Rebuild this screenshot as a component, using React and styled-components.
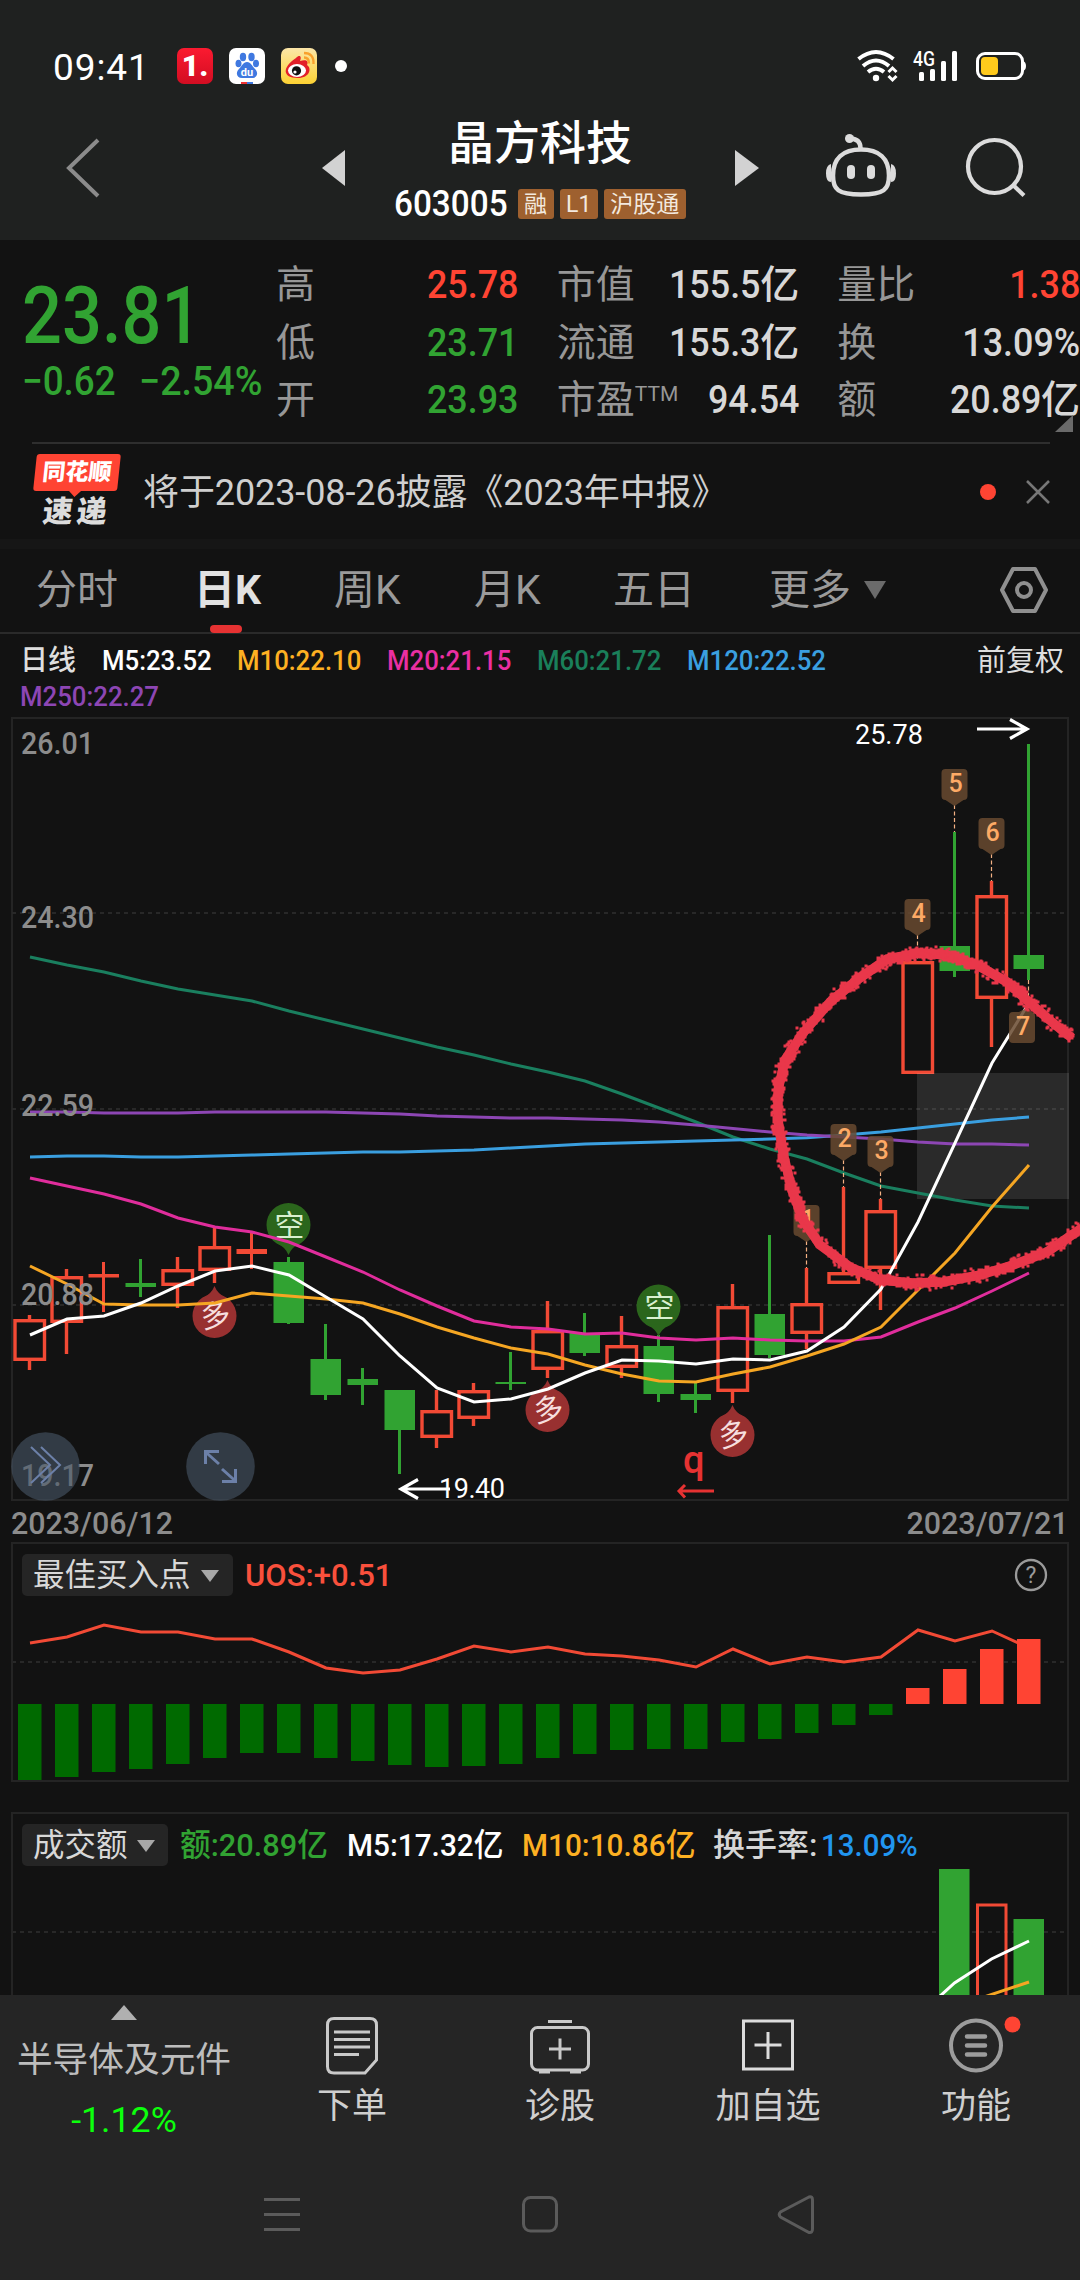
import React from "react";
import styled, { createGlobalStyle } from "styled-components";

const GlobalStyle = createGlobalStyle`
  * {
    box-sizing: border-box;
  }
  body {
    margin: 0;
    background: #121212;
    font-family: Roboto, "Noto Sans CJK SC", sans-serif;
  }
  svg {
    display: block;
    flex: none;
  }
`;

const RED = "#ff4433";
const GREEN = "#31a332";

const Screen = styled.div`
  width: 1080px;
  height: 2280px;
  overflow: hidden;
  display: flex;
  flex-direction: column;
  background: #121212;
  color: #d6d6d6;
`;

// condensed numerals
const Digits = styled.span`
  display: inline-block;
  white-space: nowrap;
  font-weight: ${({ $weight }) => $weight || 500};
  color: ${({ $color }) => $color || "inherit"};
  transform: scaleX(${({ $stretch }) => $stretch || 0.92});
  transform-origin: ${({ $right }) => ($right ? "right" : "left")} center;
`;

/* ---------- status bar ---------- */

const StatusBar = styled.div`
  height: 92px;
  padding: 40px 53px 0 53px;
  background: #1f2120;
  display: flex;
  justify-content: space-between;
  color: #fff;
`;

const StatusGroup = styled.div`
  display: flex;
  align-items: center;
  height: 52px;
`;

const Clock = styled.div`
  width: 124px;
  font-size: 37px;
  line-height: 52px;
  padding-top: 4px;
  letter-spacing: 0.9px;
`;

const AppIcon = styled.div`
  width: 36px;
  height: 36px;
  margin-right: 16px;
  border-radius: 7px;
  overflow: hidden;
  background: ${({ $bg }) => $bg};
  color: #fff;
  font-size: 30px;
  font-weight: 900;
  line-height: 36px;
  text-align: center;
`;

const MoreDot = styled.div`
  width: 12px;
  height: 12px;
  margin-left: 2px;
  border-radius: 50%;
  background: #fff;
`;

function StatusIcons() {
  return (
    <svg width="172" height="52" viewBox="855 40 172 52">
      <g fill="none" stroke="#fff" strokeWidth="4">
        <path d="M858.5 59 Q876 45 893.5 59" />
        <path d="M863 66 Q876 55 889 66" />
        <path d="M868 72 Q876 65.500 884 72" />
      </g>
      <circle cx="876" cy="78" r="3.200" fill="#fff" />
      <path d="M888.500 72 l4 -4 l4 4 M888.500 76 l4 4 l4 -4" fill="none" stroke="#fff" strokeWidth="3" />
      <text x="913" y="66" fontSize="20" fontWeight="500" fill="#fff" textLength="22" lengthAdjust="spacingAndGlyphs">
        4G
      </text>
      <g fill="#fff">
        <rect x="919" y="72" width="5" height="9" rx="1.500" />
        <rect x="930" y="69" width="5" height="12" rx="1.500" />
        <rect x="941" y="61" width="5" height="20" rx="1.500" />
        <rect x="952" y="51" width="5" height="30" rx="1.500" />
      </g>
      <rect x="977.500" y="53.500" width="45" height="25" rx="7.500" fill="none" stroke="#fff" strokeWidth="3" />
      <path d="M1023 61 q3 1 3 5 t-3 5z" fill="#fff" />
      <rect x="981" y="57" width="17" height="18" rx="4" fill="#ffca1c" />
    </svg>
  );
}

function Status() {
  return (
    <StatusBar>
      <StatusGroup>
        <Clock>09:41</Clock>
        <AppIcon $bg="linear-gradient(#fb1a30, #d20d22)">1.</AppIcon>
        <AppIcon $bg="#fff">
          <svg width="36" height="36" viewBox="0 0 36 36">
            <g fill="#3f78e0">
              <ellipse cx="14" cy="9" rx="3.200" ry="4.200" />
              <ellipse cx="22.500" cy="9" rx="3.200" ry="4.200" />
              <ellipse cx="9.500" cy="15.500" rx="3" ry="3.800" />
              <ellipse cx="27" cy="15.500" rx="3" ry="3.800" />
              <path d="M18 14 c4 0 5 4 8 7 c4 4 2 9 -3 9 h-10 c-5 0 -7 -5 -3 -9 c3 -3 4 -7 8 -7z" />
            </g>
            <text x="18" y="28" fontSize="11" fontWeight="700" fill="#fff" textAnchor="middle">
              du
            </text>
            <rect x="12" y="34" width="6" height="2" fill="#e33" />
            <rect x="18" y="34" width="6" height="2" fill="#3f78e0" />
          </svg>
        </AppIcon>
        <AppIcon $bg="linear-gradient(#fbe6a8, #fcd233)">
          <svg width="36" height="36" viewBox="0 0 36 36">
            <path d="M15 10 c4 -4 6 -1 4 3 c6 -2 9 0 7 4 c5 3 3 13 -9 13 c-16 0 -16 -11 -2 -20z" fill="#e3202a" />
            <ellipse cx="16" cy="22.500" rx="9" ry="6.500" fill="#fff" />
            <circle cx="15.500" cy="22.800" r="4.600" fill="#111" />
            <circle cx="14" cy="24" r="1.600" fill="#fff" />
            <path d="M23 9.500 q5 0 5 6 M23 5 q10 0 9.500 11" fill="none" stroke="#f9a12c" strokeWidth="2.400" />
          </svg>
        </AppIcon>
        <MoreDot />
      </StatusGroup>
      <StatusGroup>
        <StatusIcons />
      </StatusGroup>
    </StatusBar>
  );
}

/* ---------- title bar ---------- */

const TitleBar = styled.header`
  height: 148px;
  background: #1f2120;
  display: grid;
  grid-template-columns: 322px 23px 390px 24px 67px 70px 69px 58px;
  align-items: center;
`;

const BackSlot = styled.div`
  padding: 3px 0 0 65px;
`;

const StockTitle = styled.div`
  align-self: start;
  padding-top: 24px;
  display: flex;
  flex-direction: column;
  align-items: center;
`;

const StockName = styled.div`
  height: 50px;
  font-size: 46px;
  font-weight: 500;
  line-height: 54px;
  color: #fff;
`;

const StockCode = styled.div`
  margin-top: 22px;
  width: 293px;
  height: 32px;
  display: flex;
  align-items: center;
  gap: 6px;
  font-size: 37px;
  color: #fff;
`;

const CodeDigits = styled(Digits)`
  width: 118px;
  line-height: 34px;
`;

const Tag = styled.span`
  height: 30px;
  padding: 0 6.5px;
  border-radius: 3px;
  background: #9e602f;
  color: #f3e9df;
  font-size: 23px;
  line-height: 31px;
  white-space: nowrap;
`;

const Slot = styled.div`
  padding-top: ${({ $top }) => $top || 0}px;
`;

function Header() {
  return (
    <TitleBar>
      <BackSlot>
        <svg width="36" height="60" viewBox="0 0 36 60">
          <path d="M33 2 L4 30 L33 58" fill="none" stroke="#8b8b8b" strokeWidth="4" />
        </svg>
      </BackSlot>
      <Slot $top={4}>
        <svg width="23" height="36">
          <path d="M23 0 V36 L0 18z" fill="#d2d2d2" />
        </svg>
      </Slot>
      <StockTitle>
        <StockName>晶方科技</StockName>
        <StockCode>
          <CodeDigits $stretch={0.9}>603005</CodeDigits>
          <Tag>融</Tag>
          <Tag>L1</Tag>
          <Tag>沪股通</Tag>
        </StockCode>
      </StockTitle>
      <Slot $top={4}>
        <svg width="24" height="36">
          <path d="M0 0 V36 L24 18z" fill="#d2d2d2" />
        </svg>
      </Slot>
      <span />
      <svg width="70" height="66" viewBox="826 134 70 66">
        <g fill="none" stroke="#dcdcdc" strokeWidth="4.500">
          <path d="M861 150.500 c-18 0 -28 9 -28 26 c0 14 5 19 28 19 s28 -5 28 -19 c0 -17 -10 -26 -28 -26z" />
          <path d="M860.500 149 c0 -6 -3 -9 -10 -9.500" />
        </g>
        <g fill="#dcdcdc">
          <circle cx="849.500" cy="139.500" r="4.500" />
          <rect x="847" y="166" width="8" height="14" rx="4" />
          <rect x="867" y="166" width="8" height="14" rx="4" />
          <path d="M831 165 q-5 1 -5 9.500 t5 8.500z" />
          <path d="M891 165 q5 1 5 9.500 t-5 8.500z" />
        </g>
      </svg>
      <span />
      <Slot $top={4}>
        <svg width="62" height="62" viewBox="965 137 62 62">
          <circle cx="994.500" cy="166.500" r="26.500" fill="none" stroke="#dcdcdc" strokeWidth="4.200" />
          <path d="M1013 185 L1024 195.500" stroke="#dcdcdc" strokeWidth="4.200" />
        </svg>
      </Slot>
    </TitleBar>
  );
}

/* ---------- quote ---------- */

const QuotePanel = styled.section`
  height: 204px;
  display: grid;
  grid-template-columns: 276px 804px;
  position: relative;
`;

const PriceBlock = styled.div`
  padding: 15px 0 0 22px;
  color: ${GREEN};
`;

const Price = styled.div`
  height: 78px;
  padding-top: 22px;
  font-size: 79px;
  line-height: 78px;
`;

const Change = styled.div`
  margin-top: 29px;
  display: grid;
  grid-template-columns: 117px 125px;
  font-size: 40px;
  line-height: 40px;
`;

const StatColumns = styled.div`
  padding-top: 17px;
  display: flex;
  gap: 38px;
`;

const StatColumn = styled.div`
  flex: 1;
`;

const StatRow = styled.div`
  height: 57.5px;
  display: flex;
  justify-content: space-between;
  font-size: 39px;
  line-height: 57.5px;
  white-space: nowrap;
`;

const StatLabel = styled.span`
  color: #979797;
`;

const Sup = styled.span`
  position: relative;
  top: -12px;
  font-size: 21px;
`;

const StatValue = styled.span`
  color: ${({ $color }) => $color || "#d8d8d8"};
  font-weight: 500;
`;

const Corner = styled.div`
  position: absolute;
  right: 7px;
  bottom: 12px;
  border-left: 18px solid transparent;
  border-bottom: 17px solid #6a6a6a;
`;

const stats = [
  [
    { label: "高", value: "25.78", color: RED },
    { label: "低", value: "23.71", color: GREEN },
    { label: "开", value: "23.93", color: GREEN },
  ],
  [
    { label: "市值", value: "155.5", unit: "亿" },
    { label: "流通", value: "155.3", unit: "亿" },
    { label: "市盈", sup: "TTM", value: "94.54" },
  ],
  [
    { label: "量比", value: "1.38", color: RED },
    { label: "换", value: "13.09%" },
    { label: "额", value: "20.89", unit: "亿" },
  ],
];

function Quote() {
  return (
    <QuotePanel>
      <PriceBlock>
        <Price>
          <Digits $stretch={0.89}>23.81</Digits>
        </Price>
        <Change>
          <Digits>−0.62</Digits>
          <Digits $stretch={0.94}>−2.54%</Digits>
        </Change>
      </PriceBlock>
      <StatColumns>
        {stats.map((column, i) => (
          <StatColumn key={i}>
            {column.map((s) => (
              <StatRow key={s.label}>
                <StatLabel>
                  {s.label}
                  {s.sup && <Sup>{s.sup}</Sup>}
                </StatLabel>
                <StatValue $color={s.color}>
                  <Digits $right>{s.value}</Digits>
                  {s.unit}
                </StatValue>
              </StatRow>
            ))}
          </StatColumn>
        ))}
      </StatColumns>
      <Corner />
    </QuotePanel>
  );
}

/* ---------- news ---------- */

const News = styled.section`
  height: 97px;
  margin: -2px 30px 0 32px;
  border-top: 2px solid #2e2e2e;
  display: flex;
  align-items: center;
`;

const NewsLogo = styled.div`
  width: 88px;
  height: 76px;
  font-weight: 900;
  color: #fff;
`;

const LogoTop = styled.div`
  position: relative;
  width: 84px;
  height: 37px;
  margin-left: 3px;
  border-radius: 3px;
  background: ${RED};
  transform: skewX(-6deg);
  font-size: 23px;
  line-height: 37px;
  text-align: center;
  &::after {
    content: "";
    position: absolute;
    left: 36px;
    top: 37px;
    border: 6px solid transparent;
    border-top-color: ${RED};
    border-bottom: 0;
  }
`;

const LogoBottom = styled.div`
  padding-left: 11px;
  height: 38px;
  font-size: 30px;
  line-height: 41px;
  letter-spacing: 4px;
  color: #dcdcdc;
  transform: skewX(-6deg);
`;

const NewsText = styled.div`
  flex: 1;
  margin-left: 23px;
  padding-top: 2px;
  font-size: 36px;
  line-height: 50px;
  letter-spacing: -0.1px;
  color: #cfcfcf;
`;

const RedDot = styled.div`
  width: 16px;
  height: 16px;
  margin-right: 30px;
  border-radius: 50%;
  background: ${RED};
`;

/* ---------- tabs ---------- */

const Tabs = styled.nav`
  height: 95px;
  border-top: 10px solid #161616;
  border-bottom: 2px solid #2a2a2a;
  padding: 0 31px 0 36px;
  display: grid;
  grid-template-columns: 158px 140px 140px 139px 156px 1fr 49px;
`;

const Tab = styled.div`
  font-size: 41px;
  line-height: 48px;
  height: 84px;
  padding-bottom: 2px;
  color: ${({ $active }) => ($active ? "#e2e2e2" : "#9a9a9a")};
  font-weight: ${({ $active }) => ($active ? 700 : 400)};
  display: flex;
  align-items: center;
  position: relative;
  white-space: nowrap;
  &::after {
    content: "";
    display: ${({ $active }) => ($active ? "block" : "none")};
    position: absolute;
    left: 16px;
    bottom: 0;
    width: 32px;
    height: 8px;
    border-radius: 4px;
    background: #e63232;
  }
`;

const Caret = styled.span`
  margin-left: ${({ $gap }) => $gap}px;
  border: ${({ $w }) => $w / 2}px solid transparent;
  border-top: ${({ $h }) => $h}px solid ${({ $color }) => $color};
  border-bottom: 0;
`;

function TabBar() {
  return (
    <Tabs>
      <Tab>分时</Tab>
      <Tab $active>日K</Tab>
      <Tab>周K</Tab>
      <Tab>月K</Tab>
      <Tab>五日</Tab>
      <Tab>
        更多
        <Caret $gap={13} $w={23} $h={18} $color="#6b6b6b" />
      </Tab>
      <Tab>
        <svg width="48" height="46" viewBox="0 0 48 46">
          <path d="M13 2 H35 L46 23 L35 44 H13 L2 23z" fill="none" stroke="#8f8f8f" strokeWidth="4" strokeLinejoin="round" />
          <circle cx="24" cy="23" r="7" fill="none" stroke="#8f8f8f" strokeWidth="4" />
        </svg>
      </Tab>
    </Tabs>
  );
}

/* ---------- moving average legend ---------- */

const Legend = styled.div`
  height: 82px;
  padding: 9px 16px 0 20px;
  display: grid;
  grid-template-columns: 82px 135px 150px 150px 150px 1fr auto;
  grid-auto-rows: 36px;
  font-size: 28px;
  line-height: 36px;
`;

const LegendLabel = styled.span`
  font-weight: ${({ $bold }) => ($bold ? 500 : 400)};
  font-size: ${({ $bold }) => ($bold ? 28 : 29)}px;
  color: #dedede;
`;

const averages = [
  { text: "M5:23.52", color: "#ffffff" },
  { text: "M10:22.10", color: "#fdb022" },
  { text: "M20:21.15", color: "#ea2fa2" },
  { text: "M60:21.72", color: "#1a7f5a" },
  { text: "M120:22.52", color: "#3a9fe0" },
];

/* ---------- candles ---------- */

const candleX = (i) => 29.5 + i * 37;

// [up, high, bodyTop, bodyBottom, low] in chart units
const candles = [
  [1, 1315, 1319, 1361, 1370],
  [1, 1269, 1276, 1323, 1354],
  [1, 1262, 1274, 1277.5, 1312],
  [0, 1259, 1283, 1287, 1297],
  [1, 1257, 1269, 1286, 1308],
  [1, 1228, 1246, 1271, 1283],
  [1, 1232, 1249, 1254, 1269],
  [0, 1257, 1262, 1323, 1324],
  [0, 1324, 1359, 1395, 1400],
  [0, 1368, 1379, 1385, 1405],
  [0, 1390, 1390, 1430, 1474],
  [1, 1390, 1410, 1438, 1448],
  [1, 1383, 1390, 1419, 1426],
  [0, 1352, 1382, 1384, 1390],
  [1, 1301, 1330, 1370, 1378],
  [0, 1313, 1333, 1353, 1356],
  [1, 1316, 1345, 1368, 1378],
  [0, 1335, 1346, 1394, 1402],
  [0, 1383, 1394, 1400, 1413],
  [1, 1284, 1306, 1392, 1403],
  [0, 1235, 1314, 1355, 1358],
  [1, 1268, 1303, 1334, 1349],
  [1, 1187, 1272, 1284, 1284],
  [1, 1199, 1210, 1269, 1310],
  [1, 961, 961, 1074, 1074],
  [0, 832, 946, 971, 977],
  [1, 881, 895, 999, 1047],
  [0, 744, 955, 969, 980],
];

const lines = [
  {
    color: "#1a7f5f",
    ys: [957, 965, 972, 981, 989, 995, 1001, 1011, 1020, 1029, 1038, 1047, 1055, 1064, 1072, 1081, 1094, 1108, 1122, 1137, 1149, 1159, 1173, 1186, 1193, 1200, 1206, 1208],
  },
  {
    color: "#3a9fe0",
    ys: [1157, 1156, 1156, 1157, 1157, 1156, 1155, 1154, 1153, 1152, 1152, 1151, 1150, 1148, 1146, 1144, 1143, 1142, 1141, 1140, 1139, 1137.7, 1135, 1132, 1128, 1124, 1120, 1117],
  },
  {
    color: "#8d46b4",
    ys: [1112, 1112, 1113, 1113, 1113, 1112, 1112, 1112, 1112, 1113, 1114, 1116, 1117, 1118, 1118, 1119, 1120, 1122, 1125, 1128.5, 1132, 1135, 1137, 1139, 1142, 1144, 1144, 1145],
  },
  {
    color: "#e02d9c",
    ys: [1178, 1186, 1194, 1204, 1218, 1227, 1232, 1242, 1257, 1272, 1290, 1306, 1321, 1327, 1329, 1334, 1333, 1338, 1340, 1338, 1340, 1341, 1341, 1337, 1322, 1308, 1291, 1273],
  },
  {
    color: "#f5a623",
    ys: [1266, 1284, 1304, 1305, 1305, 1303, 1293, 1296, 1299, 1303, 1314, 1327, 1338, 1348, 1354, 1365, 1374, 1381, 1382, 1374, 1367, 1356, 1344, 1327, 1290, 1253, 1207, 1165],
  },
  {
    color: "#ffffff",
    ys: [1335, 1319, 1316, 1303, 1286, 1271, 1266, 1275, 1297, 1319, 1356, 1388, 1402, 1399, 1389, 1373, 1360, 1361, 1364, 1359, 1360, 1351, 1327, 1289, 1222, 1143, 1063, 1003],
  },
];

const toPoints = (ys) => ys.map((y, i) => `${candleX(i) + 0.5},${y}`).join(" ");

const scaleLabels = [
  ["26.01", 754],
  ["24.30", 928],
  ["22.59", 1116],
  ["20.88", 1305],
  ["19.17", 1486],
];

// [number, candle index, box top, candle high]
const countTags = [
  [1, 21, 1205, 1268],
  [2, 22, 1124, 1187],
  [3, 23, 1136, 1199],
  [4, 24, 899, 961],
  [5, 25, 769, 832],
  [6, 26, 818, 881],
];

const pins = [
  { text: "空", x: 288.5, y: 1225, dir: 1 },
  { text: "空", x: 658.5, y: 1306.5, dir: 1 },
  { text: "多", x: 214.5, y: 1316, dir: -1 },
  { text: "多", x: 547.5, y: 1410, dir: -1 },
  { text: "多", x: 732.5, y: 1435, dir: -1 },
];

const scribble = [
  [1072, 1038], [1053, 1023], [1030, 1003], [1007, 982], [977, 965], [947, 955], [920, 953],
  [887, 959], [857, 980], [830, 1002], [803, 1033], [785, 1060], [778, 1090], [778, 1120],
  [783, 1153], [792, 1190], [803, 1220], [820, 1245], [850, 1267], [880, 1280], [913, 1283],
  [943, 1282], [980, 1275], [1013, 1265], [1047, 1252], [1082, 1228],
];

// small square dabs scattered along the pen stroke
function crayonPath(points) {
  let seed = 7;
  const rand = () => {
    seed = (seed * 16807) % 2147483647;
    return seed / 2147483647;
  };
  let d = "";
  for (let i = 0; i < points.length - 1; i++) {
    const [x1, y1] = points[i];
    const [x2, y2] = points[i + 1];
    const len = Math.hypot(x2 - x1, y2 - y1);
    const nx = (y1 - y2) / len;
    const ny = (x2 - x1) / len;
    for (let s = 0; s < len; s += 0.5) {
      const t = s / len;
      const off = (rand() + rand() - 1) * 8;
      const x = Math.round(x1 + (x2 - x1) * t + nx * off) - 1.5;
      const y = Math.round(y1 + (y2 - y1) * t + ny * off) - 1.5;
      d += `M${x} ${y}h3v3h-3z`;
    }
  }
  return d;
}

function Candle({ data, x }) {
  const [up, high, top, bottom, low] = data;
  const color = up ? "#f24a35" : GREEN;
  if (up && bottom - top > 6) {
    return (
      <g stroke={color} strokeWidth="3.400" fill="none">
        <path d={`M${x} ${high}V${top} M${x} ${bottom}V${low}`} />
        <rect x={x - 14.5} y={top + 1.7} width="29.500" height={bottom - top - 3.4} />
      </g>
    );
  }
  return (
    <g fill={color}>
      <rect x={x - 1.5} y={high} width="3" height={low - high} />
      <rect x={x - 15} y={top} width="30.500" height={bottom - top} />
    </g>
  );
}

function CountTag({ n, x, top, high }) {
  return (
    <g>
      <path d={`M${x} ${top + 36}V${high}`} stroke="#f4b183" strokeWidth="1.200" strokeDasharray="4 2.500" />
      <path
        d={`M${x - 9} ${top}h18q4 0 4 4v23q0 4 -4 4l-9 6l-9 -6q-4 0 -4 -4v-23q0 -4 4 -4z`}
        fill="#684a30"
        fillOpacity="0.85"
      />
      <text x={x + 1} y={top + 23} fontSize="25" fontWeight="500" fill="#fdaa66" textAnchor="middle">
        {n}
      </text>
    </g>
  );
}

function Pin({ text, x, y, dir }) {
  return (
    <g fill={dir > 0 ? "#2b661c" : "#983030"}>
      <circle cx={x} cy={y} r="22" />
      <path d={`M${x - 12} ${y + 18 * dir}Q${x - 3} ${y + 22 * dir} ${x} ${y + 30 * dir}Q${x + 3} ${y + 22 * dir} ${x + 12} ${y + 18 * dir}z`} />
      <text
        x={x + 1}
        y={y + 10.5}
        fontSize="30"
        fill={dir > 0 ? "#d9f0cf" : "#f6dede"}
        textAnchor="middle"
        transform={dir > 0 ? undefined : `rotate(-10 ${x} ${y})`}
      >
        {text}
      </text>
    </g>
  );
}

function KChart() {
  return (
    <svg width="1080" height="788" viewBox="0 716 1080 788">
      <rect x="12" y="718" width="1056" height="782" fill="none" stroke="#242424" strokeWidth="2" />
      <path d="M12 913H1068M12 1109H1068M12 1305H1068" stroke="#282828" strokeWidth="2" strokeDasharray="4 4" />
      {candles.map((c, i) => (
        <Candle key={i} data={c} x={candleX(i)} />
      ))}
      <rect x="917" y="1073" width="152" height="126" fill="#fff" fillOpacity="0.1" />
      {pins.map((p) => (
        <Pin key={p.x} {...p} />
      ))}
      {lines.map((l) => (
        <polyline key={l.color} points={toPoints(l.ys)} fill="none" stroke={l.color} strokeWidth="3" />
      ))}
      {scaleLabels.map(([label, y]) => (
        <text key={label} x="21" y={y} fontSize="32" fontWeight="500" fill="#8c8c8c" textLength="73" lengthAdjust="spacingAndGlyphs">
          {label}
        </text>
      ))}
      {countTags.map(([n, i, top, high]) => (
        <CountTag key={n} n={n} x={candleX(i)} top={top} high={high} />
      ))}
      <path d="M1028.500 980V1008" stroke="#f4b183" strokeWidth="1.200" strokeDasharray="4 2.500" />
      <path d="M1013 1012h6l9 -5l3 5q4 0 4 4v23q0 4 -4 4h-18q-4 0 -4 -4v-23q0 -4 4 -4z" fill="#684a30" fillOpacity="0.85" />
      <text x="1023" y="1035" fontSize="25" fontWeight="500" fill="#fdaa66" textAnchor="middle">
        7
      </text>
      <polyline points={scribble.join(" ")} fill="none" stroke="#e9374a" strokeWidth="9.500" strokeLinejoin="round" />
      <path d={crayonPath(scribble)} fill="#e9374a" />
      <text x="855" y="744" fontSize="27" fill="#fff">
        25.78
      </text>
      <path d="M977 729H1027M1010 719.500L1027 729L1010 738.500" fill="none" stroke="#fff" strokeWidth="3.200" />
      <text x="439" y="1498" fontSize="27" fill="#fff" textLength="66">
        19.40
      </text>
      <path d="M450 1489H401M418 1479.500L401 1489L418 1498.500" fill="none" stroke="#fff" strokeWidth="3.200" />
      <text x="683" y="1473" fontSize="38" fontWeight="500" fill="#e63232">
        q
      </text>
      <path d="M714 1491H680M685 1485L679 1491L685 1497.500" fill="none" stroke="#e63232" strokeWidth="3" />
      <g fill="#475667" fillOpacity="0.6">
        <circle cx="45.500" cy="1466.500" r="34.300" />
        <circle cx="220.500" cy="1466.500" r="34.300" />
      </g>
      <g fill="none" stroke="#6c80a8">
        <path d="M31 1447L50 1465L31 1483M41 1447L60 1465L41 1483" strokeWidth="2" />
        <path d="M219 1464L205 1451.500M205.500 1464V1451.500H219M222 1469L236 1481.500M222 1481.500H235.500V1469" strokeWidth="3" />
      </g>
    </svg>
  );
}

const DateRow = styled.div`
  height: 38px;
  padding: 0 12px 0 11px;
  display: flex;
  justify-content: space-between;
  font-size: 32px;
  line-height: 39px;
  color: #8c8c8c;
`;

/* ---------- sub charts ---------- */

const SubPanel = styled.section`
  height: ${({ $height }) => $height}px;
  margin: 0 11px;
  border: 2px solid #242424;
  border-bottom-width: ${({ $open }) => ($open ? 0 : 2)}px;
  overflow: hidden;
  display: flex;
  flex-direction: column;
`;

const SubHead = styled.div`
  height: 53px;
  flex: none;
  padding: 9px 19px 0 9px;
  display: flex;
  align-items: center;
  font-size: 32px;
  line-height: 42px;
`;

const Picker = styled.div`
  width: ${({ $width }) => $width}px;
  height: 42px;
  margin-right: 12px;
  padding: 2px 0 0 11px;
  border-radius: 5px;
  background: #252525;
  color: #d8d8d8;
  font-size: 31.5px;
  display: flex;
  align-items: center;
  white-space: nowrap;
`;

const Cell = styled.div`
  width: ${({ $width }) => $width}px;
  white-space: nowrap;
  font-weight: 500;
`;

const Spacer = styled.div`
  flex: 1;
`;

const uosLine = [1643, 1637, 1625, 1632, 1632, 1639, 1639, 1652, 1668, 1673, 1670, 1659, 1646, 1652, 1647, 1654, 1656, 1660, 1667, 1649, 1664, 1657, 1662, 1657, 1630, 1641, 1631, 1648];
const uosBars = [-77, -73, -68, -65, -60, -54, -49, -49, -54, -57, -61, -63, -62, -60, -54, -50, -46, -45, -45, -38, -35, -29, -21, -11, 16, 35, 55, 65];

function UosChart() {
  return (
    <svg width="1054" height="184" viewBox="13 1597 1054 184">
      <path d="M12 1662H1068" stroke="#282828" strokeWidth="2" strokeDasharray="4 4" />
      <polyline points={toPoints(uosLine)} fill="none" stroke="#f24a35" strokeWidth="3" />
      {uosBars.map((v, i) => (
        <rect
          key={i}
          x={candleX(i) - 11.5}
          y={v > 0 ? 1704 - v : 1704}
          width="23.500"
          height={Math.abs(v)}
          fill={v > 0 ? RED : "#006a00"}
        />
      ))}
    </svg>
  );
}

function VolumeChart() {
  return (
    <svg width="1054" height="128" viewBox="13 1867 1054 128">
      <path d="M12 1932H1068" stroke="#282828" strokeWidth="2" strokeDasharray="4 4" />
      <rect x="939" y="1869" width="30.500" height="130" fill={GREEN} />
      <rect x="977.500" y="1905" width="28.500" height="100" fill="none" stroke="#f24a35" strokeWidth="3" />
      <rect x="1013.500" y="1919" width="30.500" height="80" fill={GREEN} />
      <path d="M939 1997L954.500 1983L991.500 1959L1029 1941" fill="none" stroke="#fff" strokeWidth="3" />
      <path d="M984 1997L1029 1982" fill="none" stroke="#f5a623" strokeWidth="3" />
    </svg>
  );
}

/* ---------- bottom bar ---------- */

const BottomBar = styled.footer`
  height: 158px;
  background: #252525;
  display: grid;
  grid-template-columns: 248px repeat(4, 208px);
`;

const Sector = styled.div`
  display: flex;
  flex-direction: column;
  align-items: center;
  padding-top: 10px;
  font-size: 35.7px;
  color: #bdbdbd;
`;

const UpCaret = styled.div`
  border: 13px solid transparent;
  border-bottom: 15px solid #b0b0b0;
  border-top: 0;
`;

const SectorName = styled.div`
  margin-top: 14px;
  line-height: 52px;
`;

const SectorChange = styled.div`
  margin-top: 8px;
  line-height: 52px;
  color: #0cff0c;
`;

const Action = styled.div`
  padding-top: 18px;
  display: flex;
  flex-direction: column;
  align-items: center;
  color: #cfcfcf;
  font-size: 35px;
`;

const ActionLabel = styled.div`
  margin-top: 4px;
  line-height: 52px;
`;

const actions = [
  {
    label: "下单",
    icon: (
      <g fill="none" stroke="#c9c9c9" strokeWidth="3">
        <path d="M12 5.500H48Q54.500 5.500 54.500 12V47L43 60H12Q5.500 60 5.500 53.500V12Q5.500 5.500 12 5.500z" />
        <path d="M12 19H48M12 26.500H48M12 34H48M12 41.500H37" />
      </g>
    ),
  },
  {
    label: "诊股",
    icon: (
      <g fill="none" stroke="#c9c9c9" strokeWidth="3">
        <rect x="1.500" y="14.500" width="57" height="42.500" rx="6" />
        <path d="M18 8.500H42M30 25.500V46.500M19 36H41M9 59H20M40 59H51" />
      </g>
    ),
  },
  {
    label: "加自选",
    icon: (
      <g fill="none" stroke="#dcdcdc" strokeWidth="3">
        <rect x="5.500" y="8" width="49" height="48" />
        <path d="M30 19V46M16.500 32H43.500" />
      </g>
    ),
  },
  {
    label: "功能",
    icon: (
      <g fill="none" stroke="#9c9c9c">
        <circle cx="30" cy="32.500" r="25" strokeWidth="4" />
        <path d="M21 23.500H39M21 32.500H39M21 41.500H39" strokeWidth="4.500" strokeLinecap="round" />
        <circle cx="66.500" cy="11.500" r="8" fill={RED} stroke="none" />
      </g>
    ),
  },
];

const SystemNav = styled.div`
  flex: 1;
  background: #252525;
  display: flex;
  justify-content: space-between;
  align-items: flex-start;
  padding: 41px 264px 0 262px;
`;

function SystemBar() {
  return (
    <SystemNav>
      <svg width="40" height="42" viewBox="262 2194 40 42">
        <path d="M264 2199.500H300M264 2214.500H300M264 2229.500H300" stroke="#5b5b5b" strokeWidth="3" />
      </svg>
      <svg width="40" height="42" viewBox="519 2194 40 42">
        <rect x="523.500" y="2197.500" width="33" height="33.500" rx="7" fill="none" stroke="#5b5b5b" strokeWidth="3" />
      </svg>
      <svg width="40" height="42" viewBox="776 2194 40 42">
        <path d="M809 2197 L780.500 2212 Q778 2214.500 780.500 2217 L809 2232.500 Q812.500 2233 812.500 2229 V2200 Q812.500 2196 809 2197z" fill="none" stroke="#5b5b5b" strokeWidth="3" />
      </svg>
    </SystemNav>
  );
}

export default function App() {
  return (
    <Screen>
      <GlobalStyle />
      <Status />
      <Header />
      <Quote />
      <News>
        <NewsLogo>
          <LogoTop>同花顺</LogoTop>
          <LogoBottom>速递</LogoBottom>
        </NewsLogo>
        <NewsText>将于2023-08-26披露《2023年中报》</NewsText>
        <RedDot />
        <svg width="24" height="24">
          <path d="M1 1L23 23M23 1L1 23" stroke="#777" strokeWidth="2.500" />
        </svg>
      </News>
      <TabBar />
      <Legend>
        <LegendLabel $bold>日线</LegendLabel>
        {averages.map((a) => (
          <Digits key={a.text} $color={a.color}>
            {a.text}
          </Digits>
        ))}
        <LegendLabel>前复权</LegendLabel>
        <Digits $color="#8d46b4">M250:22.27</Digits>
      </Legend>
      <KChart />
      <DateRow>
        <Digits $stretch={0.95}>2023/06/12</Digits>
        <Digits $right $stretch={0.95}>
          2023/07/21
        </Digits>
      </DateRow>
      <SubPanel $height={240}>
        <SubHead>
          <Picker $width={211}>
            最佳买入点
            <Caret $gap={10} $w={18} $h={12} $color="#a8a8a8" />
          </Picker>
          <Digits $color="#f9503c" $stretch={0.97}>
            UOS:+0.51
          </Digits>
          <Spacer />
          <svg width="34" height="34" viewBox="0 0 34 34">
            <circle cx="17" cy="17" r="15" fill="none" stroke="#9a9a9a" strokeWidth="2.300" />
            <text x="17" y="25" fontSize="23" fill="#9a9a9a" textAnchor="middle">
              ?
            </text>
          </svg>
        </SubHead>
        <UosChart />
      </SubPanel>
      <Slot $top={30} />
      <SubPanel $height={183} $open>
        <SubHead>
          <Picker $width={146}>
            成交额
            <Caret $gap={9} $w={18} $h={12} $color="#a8a8a8" />
          </Picker>
          <Cell $width={167}>
            <Digits $color={GREEN} $stretch={0.96}>
              额:20.89亿
            </Digits>
          </Cell>
          <Cell $width={175}>
            <Digits $color="#fff" $stretch={0.93}>
              M5:17.32亿
            </Digits>
          </Cell>
          <Cell $width={191}>
            <Digits $color="#fdb022" $stretch={0.93}>
              M10:10.86亿
            </Digits>
          </Cell>
          <Cell $width={108}>换手率:</Cell>
          <Digits $color="#2196f0">13.09%</Digits>
        </SubHead>
        <VolumeChart />
      </SubPanel>
      <BottomBar>
        <Sector>
          <UpCaret />
          <SectorName>半导体及元件</SectorName>
          <SectorChange>-1.12%</SectorChange>
        </Sector>
        {actions.map((a) => (
          <Action key={a.label}>
            <svg width="60" height="64" viewBox="0 0 60 64" overflow="visible">
              {a.icon}
            </svg>
            <ActionLabel>{a.label}</ActionLabel>
          </Action>
        ))}
      </BottomBar>
      <SystemBar />
    </Screen>
  );
}
